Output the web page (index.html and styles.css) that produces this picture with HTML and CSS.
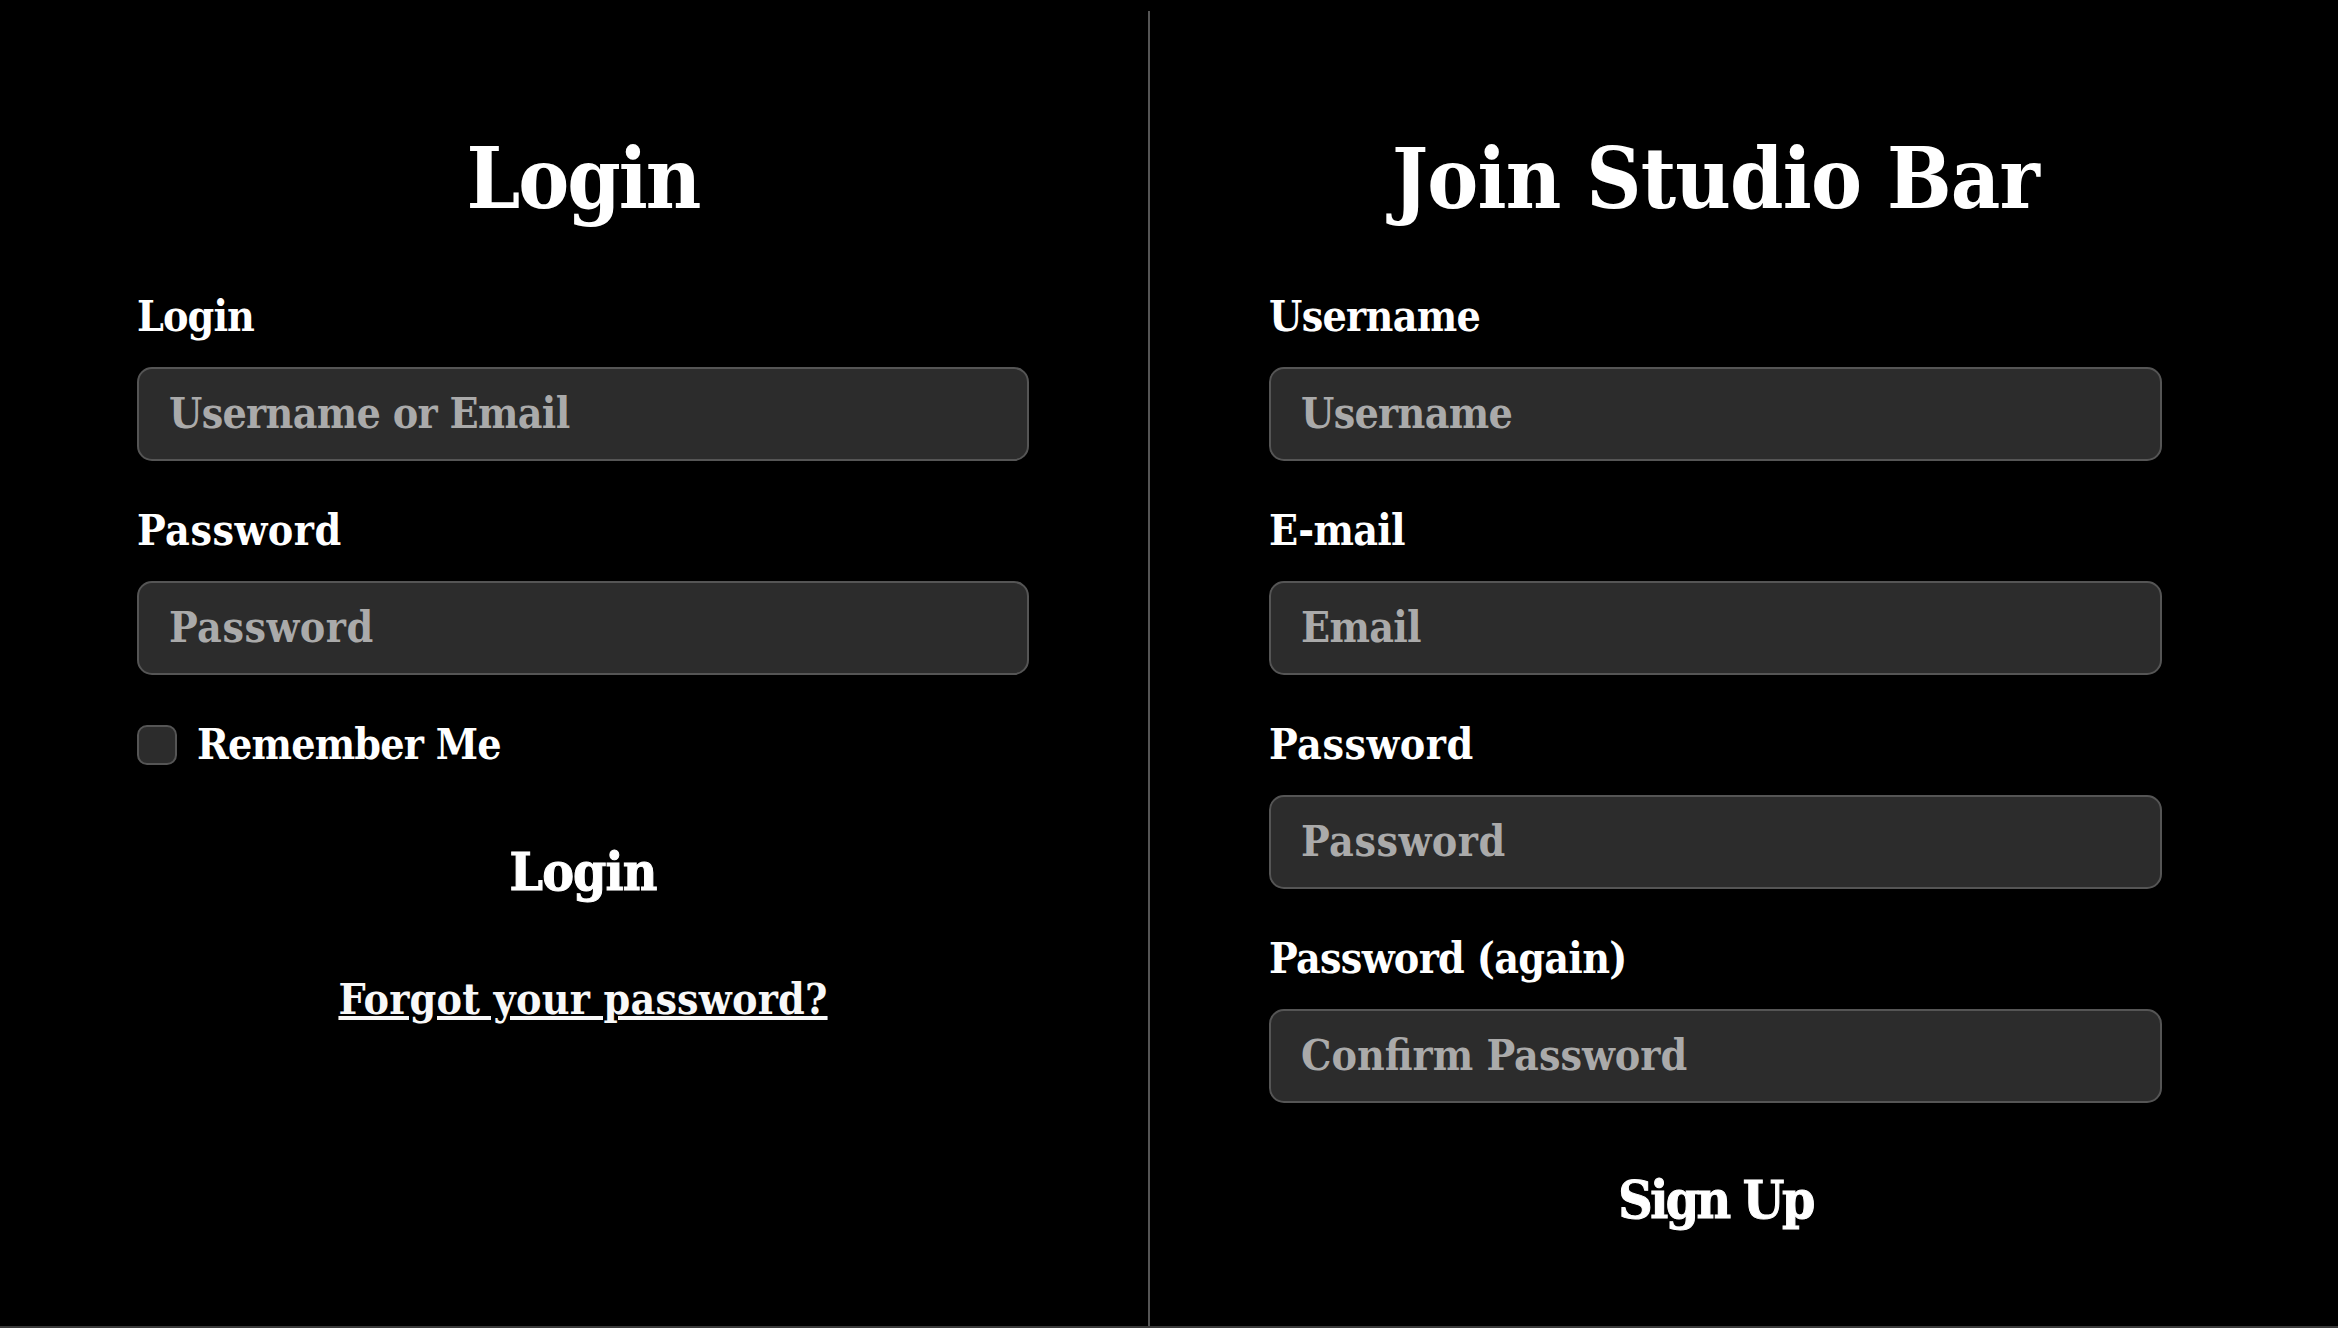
FILE: index.html
```html
<!DOCTYPE html>
<html lang="en">
<head>
<meta charset="utf-8">
<title>Studio Bar</title>
<link rel="stylesheet" href="styles.css">
</head>
<body>
<main class="page">
  <section class="panel panel-login">
    <h1 class="title title-login">Login</h1>
    <form class="form">
      <div class="field">
        <label class="label label-login" for="login">Login</label>
        <input class="input" id="login" type="text" placeholder="Username or Email">
      </div>
      <div class="field">
        <label class="label word-password" for="password">Password</label>
        <input class="input word-password" id="password" type="password" placeholder="Password">
      </div>
      <label class="remember"><input class="checkbox" type="checkbox"><span>Remember Me</span></label>
      <button class="submit" type="button">Login</button>
      <a class="forgot" href="#">Forgot your password?</a>
    </form>
  </section>
  <section class="panel panel-join">
    <h1 class="title title-join">Join Studio Bar</h1>
    <form class="form">
      <div class="field">
        <label class="label" for="username">Username</label>
        <input class="input" id="username" type="text" placeholder="Username">
      </div>
      <div class="field">
        <label class="label" for="email">E-mail</label>
        <input class="input" id="email" type="email" placeholder="Email">
      </div>
      <div class="field">
        <label class="label word-password" for="new-password">Password</label>
        <input class="input word-password" id="new-password" type="password" placeholder="Password">
      </div>
      <div class="field">
        <label class="label" for="confirm">Password (again)</label>
        <input class="input input-confirm" id="confirm" type="password" placeholder="Confirm Password">
      </div>
      <button class="submit submit-signup" type="button">Sign Up</button>
    </form>
  </section>
</main>
</body>
</html>
```
FILE: styles.css
```css
* {
  box-sizing: border-box;
}

body {
  margin: 0;
  height: 1328px;
  padding: 11px 17px 0;
  overflow: hidden;
  background: #000;
  color: #fff;
  font: bold 42.5px/60px "DejaVu Serif Condensed", "DejaVu Serif", serif;
  letter-spacing: -0.7px;
  border-bottom: 2px solid #3a3a3a;
}

.page {
  display: flex;
  height: 1317px;
}

.panel {
  padding: 107px 120px 0;
}

.panel-login {
  width: 1133px;
  padding-right: 119px;
  border-right: 2px solid #555;
}

.panel-join {
  width: 1132px;
  padding-left: 119px;
}

.title {
  margin: 0 0 48px;
  font-size: 85px;
  line-height: 120px;
  text-align: center;
  white-space: nowrap;
}

.title-login {
  letter-spacing: -2px;
}

.title-join {
  letter-spacing: -0.8px;
}

.form {
  display: flex;
  flex-direction: column;
}

.field {
  display: flex;
  flex-direction: column;
  gap: 21px;
  margin-bottom: 39px;
}

.label-login {
  letter-spacing: -0.9px;
}

.input {
  width: 100%;
  height: 94px;
  padding: 0 30px 2px;
  border: 2px solid #555;
  border-radius: 15px;
  background: #2c2c2c;
  color: #fff;
  font: inherit;
  letter-spacing: -0.7px;
}

.input::placeholder {
  color: #aaa;
  opacity: 1;
}

.word-password {
  letter-spacing: 0.5px;
}

.input-confirm {
  letter-spacing: 0;
}

.remember {
  display: flex;
  align-items: center;
  gap: 20px;
  letter-spacing: -0.8px;
}

.checkbox {
  appearance: none;
  width: 40px;
  height: 40px;
  margin: 2px 0 0;
  border: 2px solid #555;
  border-radius: 10px;
  background: #2c2c2c;
}

.submit {
  align-self: center;
  margin: 57px 0 0;
  padding: 0;
  border: 0;
  background: none;
  color: #fff;
  font: inherit;
  font-size: 53px;
  line-height: 80px;
  letter-spacing: -0.9px;
  -webkit-text-stroke: 1px #fff;
}

.submit-signup {
  margin-top: 17px;
  letter-spacing: -2.5px;
}

.forgot {
  align-self: center;
  margin-top: 58px;
  color: #f8f8f8;
  letter-spacing: 0.2px;
  text-decoration: underline;
  text-decoration-thickness: 4px;
  text-underline-offset: 2px;
}
```
